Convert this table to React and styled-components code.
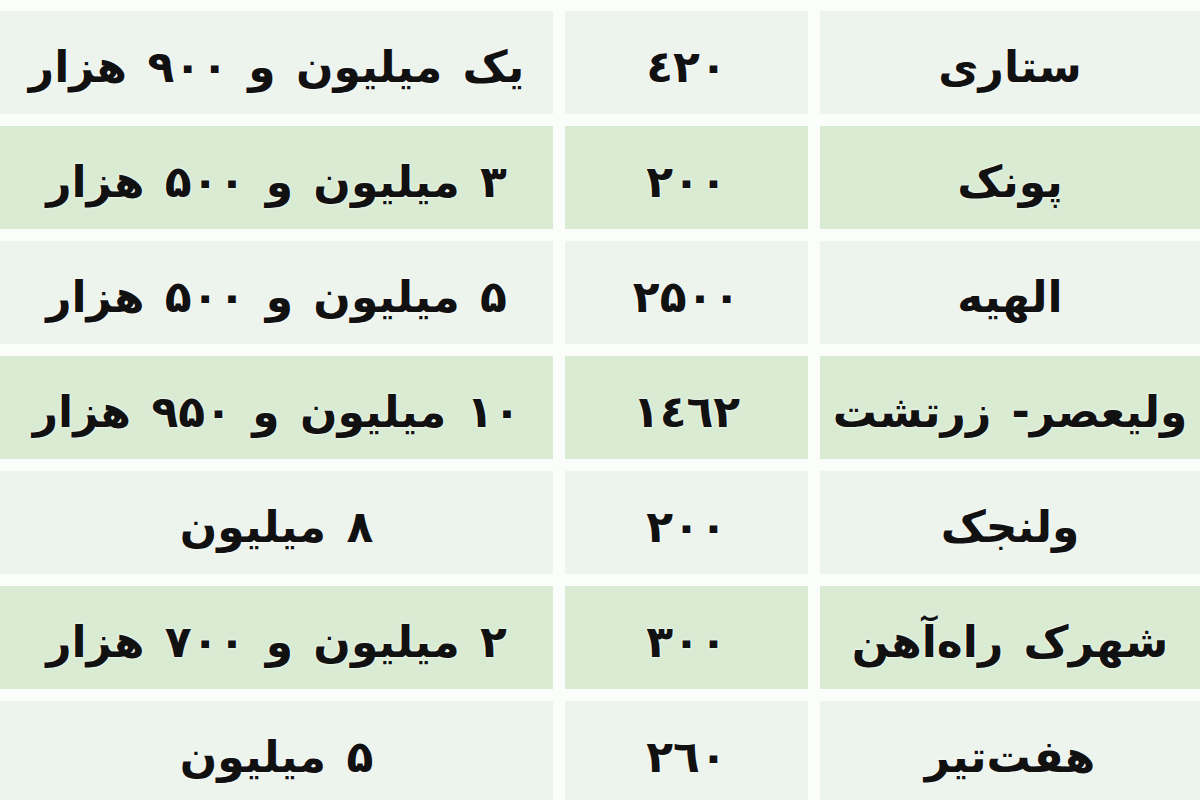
import React from "react";
import styled, { createGlobalStyle } from "styled-components";

const GlobalStyle = createGlobalStyle`
  html, body {
    margin: 0;
    padding: 0;
    background: #fbfdfb;
  }
  body {
    width: 1200px;
    height: 800px;
    overflow: hidden;
  }
`;

const Table = styled.div`
  direction: rtl;
  display: grid;
  grid-template-columns: 380px 243px 553px;
  grid-auto-rows: 103px;
  column-gap: 12px;
  row-gap: 12px;
  padding-top: 11px;
  width: 1200px;
  font-family: "DejaVu Sans", "Noto Sans", sans-serif;
  font-weight: bold;
`;

const Cell = styled.div`
  display: flex;
  align-items: center;
  justify-content: center;
  background: ${(p) => (p.$green ? "#d9ebd3" : "#edf3ed")};
  color: #111;
  font-size: ${(p) => (p.$num ? "44px" : "44px")};
  letter-spacing: ${(p) => (p.$num ? "5px" : "0")};
  word-spacing: 5px;
  white-space: nowrap;
  overflow: hidden;
  text-shadow: 0 0 3px #ffffff;
  padding-top: 8px;
`;

const rows = [
  ["ستاری", "٤٢٠", "یک میلیون و ۹۰۰ هزار"],
  ["پونک", "۲۰۰", "۳ میلیون و ۵۰۰ هزار"],
  ["الهیه", "۲۵۰۰", "۵ میلیون و ۵۰۰ هزار"],
  ["ولیعصر- زرتشت", "۱٤٦۲", "۱۰ میلیون و ۹۵۰ هزار"],
  ["ولنجک", "۲۰۰", "۸ میلیون"],
  ["شهرک راه‌آهن", "۳۰۰", "۲ میلیون و ۷۰۰ هزار"],
  ["هفت‌تیر", "۲٦۰", "۵ میلیون"],
];

export default function App() {
  return (
    <>
      <GlobalStyle />
      <Table>
        {rows.map((row, i) =>
          row.map((text, j) => (
            <Cell key={i + "-" + j} $green={i % 2 === 1} $num={j === 1}>
              {text}
            </Cell>
          ))
        )}
      </Table>
    </>
  );
}
